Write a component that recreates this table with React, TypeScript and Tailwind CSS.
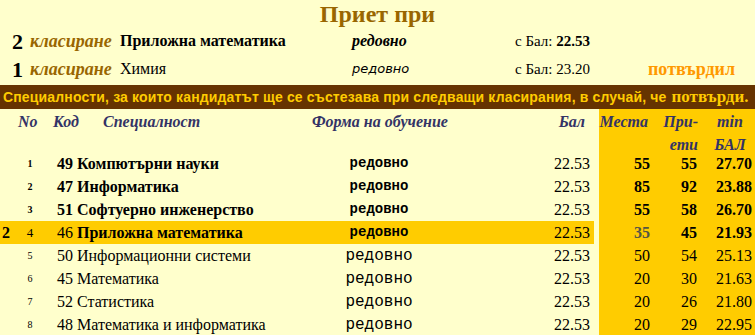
import React from 'react';

type Row = {
  mark?: string;
  no: number;
  code: number;
  name: string;
  score: string;
  places: number;
  admitted: number;
  min: string;
  bold?: boolean;
  active?: boolean;
};

const rows: Row[] = [
  { no: 1, code: 49, name: 'Компютърни науки', score: '22.53', places: 55, admitted: 55, min: '27.70', bold: true },
  { no: 2, code: 47, name: 'Информатика', score: '22.53', places: 85, admitted: 92, min: '23.88', bold: true },
  { no: 3, code: 51, name: 'Софтуерно инженерство', score: '22.53', places: 55, admitted: 58, min: '26.70', bold: true },
  { mark: '2', no: 4, code: 46, name: 'Приложна математика', score: '22.53', places: 35, admitted: 45, min: '21.93', active: true },
  { no: 5, code: 50, name: 'Информационни системи', score: '22.53', places: 50, admitted: 54, min: '25.13' },
  { no: 6, code: 45, name: 'Математика', score: '22.53', places: 20, admitted: 30, min: '21.63' },
  { no: 7, code: 52, name: 'Статистика', score: '22.53', places: 20, admitted: 26, min: '21.80' },
  { no: 8, code: 48, name: 'Математика и информатика', score: '22.53', places: 20, admitted: 29, min: '22.95' },
];

const serif = "font-['Liberation_Serif',serif]";
const mono = "font-['Liberation_Mono',monospace]";
const head = `${serif} italic font-bold text-[16px] text-[#333366]`;

const App: React.FC = () => {
  return (
    <div className={`w-[755px] h-[335px] overflow-hidden bg-[#ffffcc] text-black ${serif}`}>
      <div className="h-[27px] flex items-center justify-center text-[24px] font-bold text-[#996600] leading-none">
        Приет при
      </div>

      <div className="h-[28px] flex items-center whitespace-nowrap">
        <span className="w-[30px] pl-[12px] text-[22px] font-bold">2</span>
        <span className="w-[90px] text-[18px] font-bold italic text-[#996600]">класиране</span>
        <span className="w-[232px] text-[16px] font-bold">Приложна математика</span>
        <span className="w-[163px] text-[16px] font-bold italic">редовно</span>
        <span className="w-[133px] text-[15px]">
          с Бал: <b>22.53</b>
        </span>
      </div>
      <div className="h-[28px] flex items-center whitespace-nowrap">
        <span className="w-[30px] pl-[12px] text-[22px] font-bold">1</span>
        <span className="w-[90px] text-[18px] font-bold italic text-[#996600]">класиране</span>
        <span className="w-[232px] text-[16px]">Химия</span>
        <span className="w-[163px] text-[13px] italic font-['DejaVu_Sans',sans-serif]">редовно</span>
        <span className="w-[133px] text-[15px]">с Бал: 23.20</span>
        <span className="text-[18px] font-bold text-[#ff9900]">потвърдил</span>
      </div>

      <div className="mt-[2px] h-[24px] bg-[#663300] text-[#ffcc00] flex items-center px-[3px] whitespace-nowrap font-bold">
        <span className="text-[14px] tracking-[0.15px] font-['Liberation_Sans',sans-serif]">
          Специалности, за които кандидатът ще се състезава при следващи класирания, в случай, че
        </span>
        <span className="ml-[5px] text-[17px]">потвърди.</span>
      </div>

      <div className="flex">
        <div className="w-[594px]">
          <div className={`h-[43px] flex items-start pt-[1px] whitespace-nowrap ${head}`}>
            <span className="w-[53px] pl-[18px]">No</span>
            <span className="w-[50px]">Код</span>
            <span className="w-[209px]">Специалност</span>
            <span className="w-[200px]">Форма на обучение</span>
            <span className="w-[73px] text-right">Бал</span>
          </div>
          {rows.map((r) => {
            const strong = r.bold || r.active;
            return (
              <div
                key={r.no}
                className={`h-[23px] flex items-center whitespace-nowrap ${r.active ? 'bg-[#ffcc00]' : ''} ${r.bold ? 'font-bold' : ''}`}
              >
                <span className="w-[20px] pl-[2px] text-[16px] font-bold">{r.mark}</span>
                <span className={`w-[20px] text-center ${r.active ? 'text-[13px]' : 'text-[10px]'}`}>{r.no}</span>
                <span className="w-[260px] pl-[17px] text-[16px]">
                  {r.code} <span className={r.active ? 'font-bold' : ''}>{r.name}</span>
                </span>
                <span className={`w-[158px] text-center ${mono} ${strong ? 'font-bold text-[14px]' : 'text-[16px]'}`}>
                  редовно
                </span>
                <span className="w-[136px] pr-[4px] text-right text-[16px] font-normal">{r.score}</span>
              </div>
            );
          })}
        </div>

        <div className="ml-[5px] w-[156px] bg-[#ffcc00]">
          <div className={`h-[43px] flex items-start pt-[1px] ${head} leading-[23px]`}>
            <span className="w-[53px] pr-[4px] text-right">Места</span>
            <span className="w-[48px] pr-[2px] text-right">
              При-
              <br />
              ети
            </span>
            <span className="w-[55px] pl-[5px] text-center">
              min
              <br />
              БАЛ
            </span>
          </div>
          {rows.map((r) => (
            <div
              key={r.no}
              className={`h-[23px] flex items-center text-[16px] ${r.bold || r.active ? 'font-bold' : ''}`}
            >
              <span className={`w-[53px] pr-[2px] text-right ${r.active ? 'text-[#555544]' : ''}`}>{r.places}</span>
              <span className="w-[48px] pr-[3px] text-right">{r.admitted}</span>
              <span className="w-[55px] pr-[3px] text-right">{r.min}</span>
            </div>
          ))}
        </div>
      </div>
    </div>
  );
};

export default App;
